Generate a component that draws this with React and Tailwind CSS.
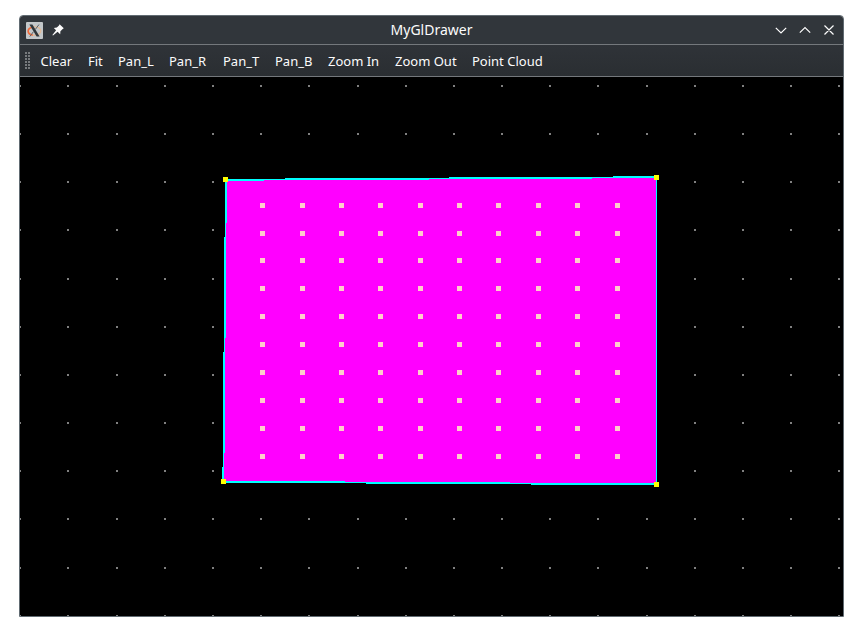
const GRID_X = [19, 67, 116, 164, 212, 260, 308, 357, 405, 453, 501, 549, 597, 646, 694, 742, 790, 838];
const GRID_Y = [85, 133, 181, 229, 278, 326, 374, 422, 470, 518, 567, 615];
const CLOUD_X = [260, 300, 339, 378, 418, 457, 496, 536, 575, 615];
const CLOUD_Y = [203, 231, 258, 286, 314, 342, 370, 398, 426, 454];
const CORNERS = [[223, 177], [654, 175], [221, 479], [654, 482]];

// Aliased outline segments: x, y, width, height
const EDGES = [
  [225, 179, 39, 2], [264, 179, 21, 1], [285, 178, 144, 2], [429, 178, 20, 1],
  [449, 177, 143, 2], [592, 177, 21, 1], [613, 176, 43, 2],
  [225, 179, 2, 44], [225, 223, 1, 14], [224, 237, 2, 101], [224, 338, 1, 14],
  [223, 352, 2, 101], [223, 453, 1, 14], [222, 467, 2, 16],
  [656, 176, 1, 308],
  [223, 481, 122, 2], [345, 482, 21, 1], [366, 482, 144, 2], [510, 483, 21, 1], [531, 483, 126, 2],
];

const ACTIONS = [
  ["Clear", "w-8 mr-[15.5px]"],
  ["Fit", "w-4 mr-[14px]"],
  ["Pan_L", "w-9 mr-[15px]"],
  ["Pan_R", "w-[38px] mr-4"],
  ["Pan_T", "w-9 mr-4"],
  ["Pan_B", "w-[38px] mr-[15px]"],
  ["Zoom In", "w-[52px] mr-[15px]"],
  ["Zoom Out", "w-[62px] mr-[15px]"],
  ["Point Cloud", "w-[72px]"],
];

function AppIcon() {
  return (
    <svg width="17" height="17" viewBox="0 0 17 17" className="shrink-0">
      <rect width="17" height="17" rx="1" fill="#c3c7c9" />
      <ellipse cx="8.7" cy="9" rx="6.2" ry="4.2" fill="none" stroke="#e3b893" strokeWidth="1.1" />
      <path d="M5.6 5.6C.8 7 .8 12.3 6.8 13" fill="none" stroke="#f0693a" strokeWidth="1.6" />
      <path d="M3.4 2.5H6.4L13.6 14.5H10.6Z" fill="#30363a" />
      <path d="M13 2.5L9.2 7.6M7.5 9.6L3.8 14.5" stroke="#5b6164" strokeWidth="1" />
    </svg>
  );
}

function PinIcon() {
  return (
    <svg width="12" height="12" viewBox="0 0 12 12" className="ml-[9px] shrink-0">
      <path d="M7.6 .2L11.8 4.3 10.7 5 8.4 7.2 8.2 10.2 5.6 7.8 1 11.6.4 11 4.1 6.3 1.8 3.9 4.8 3.6 7 1.4Z" fill="#fcfcfc" />
    </svg>
  );
}

function Scene() {
  return (
    <svg width="823" height="539" viewBox="20 77 823 539" shapeRendering="crispEdges" className="block bg-black">
      {GRID_Y.map((y) => GRID_X.map((x) => (
        <rect key={`${x}-${y}`} x={x} y={y} width="2" height="2" fill="#808080" />
      )))}
      <path
        d="M227 181H264V180H429V179H592V178H656V483H510V482H345V481H224V453H225V338H226V223H227Z"
        fill="#ff00ff"
      />
      {EDGES.map(([x, y, w, h], i) => (
        <rect key={i} x={x} y={y} width={w} height={h} fill="#00ffff" />
      ))}
      {CLOUD_Y.map((y) => CLOUD_X.map((x) => (
        <rect key={`${x}-${y}`} x={x} y={y} width="5" height="5" fill="#ffcccc" />
      )))}
      {CORNERS.map(([x, y]) => (
        <rect key={`${x}-${y}`} x={x} y={y} width="5" height="5" fill="#ffff00" />
      ))}
    </svg>
  );
}

export default function App() {
  return (
    <div className="h-[640px] w-[863px] overflow-hidden bg-white pt-[15px] pl-[19px] font-['Noto_Sans',sans-serif] text-[13px] text-[#fcfcfc]">
      <div className="h-[602px] w-[825px] overflow-hidden rounded-t-[4px] border border-[#616b72]">
        <header className="grid h-7 grid-cols-[1fr_auto_1fr] items-center bg-[#31363b]">
          <div className="flex items-center pl-[6px]">
            <AppIcon />
            <PinIcon />
          </div>
          <h1 className="text-[14px] leading-none">MyGlDrawer</h1>
          <div className="flex justify-end pr-2">
            <svg width="60" height="12" viewBox="0 0 60 12" fill="none" stroke="#fcfcfc" strokeWidth="1.2">
              <path d="M.8 3.8L6 9L11.2 3.8M24.8 8.7L30 3.5L35.2 8.7M49.5 1.5L58.5 10.5M58.5 1.5L49.5 10.5" />
            </svg>
          </div>
        </header>
        <nav className="flex h-[33px] items-center border-y border-[#74787c] bg-linear-to-b from-[#2f3338] to-[#2a2e32]">
          <svg width="6" height="18" viewBox="0 0 6 18" className="mr-[9.5px] ml-[5px] shrink-0" shapeRendering="crispEdges">
            {[0, 3, 6, 9, 12, 15].map((y) => [0, 3].map((x) => (
              <rect key={`${x}-${y}`} x={x} y={y} width="2" height="2" fill="#777a7d" />
            )))}
          </svg>
          {ACTIONS.map(([label, size]) => (
            <button key={label} type="button" className={`shrink-0 pt-[2px] text-left leading-none whitespace-nowrap ${size}`}>{label}</button>
          ))}
        </nav>
        <Scene />
      </div>
    </div>
  );
}
